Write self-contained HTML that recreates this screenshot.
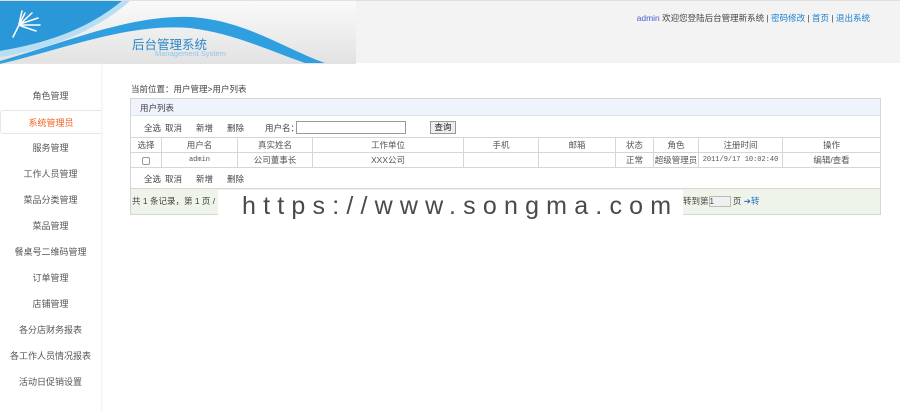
<!DOCTYPE html>
<html><head><meta charset="utf-8"><style>
*{margin:0;padding:0;box-sizing:border-box}
body{width:900px;height:412px;background:#fff;font-family:"Liberation Sans","Noto Sans CJK SC",sans-serif;font-size:9px;color:#444;position:relative;overflow:hidden}
.abs{position:absolute}
#hdr{left:0;top:0;width:900px;height:63px;background:#f3f3f3;border-top:1px solid #e0e0e0}
#top{right:30px;top:11px;font-size:8.5px;color:#444}
#top a{color:#1a7fd0;text-decoration:none}
#side{left:0;top:64px;width:101px;height:348px;box-shadow:1px 0 2px #eeeeee}
.it{position:absolute;left:0;width:101px;height:24px;line-height:24px;text-align:center;font-size:9px;color:#555}
.it.on{color:#f5601e;border:1px solid #e6e6e6;border-right:none;border-radius:3px 0 0 3px;background:#fff}
#box{left:130px;top:98px;width:751px;height:117px;border:1px solid #d6d6d6}
table{border-collapse:collapse;position:absolute;left:130px;top:137px;width:751px}
td{border:1px solid #d6d6d6;height:15px;text-align:center;font-size:8.5px;color:#555}
.tb span{margin-right:14px}
</style></head><body>
<div id="hdr" class="abs">
<svg width="356" height="63" style="position:absolute;left:0;top:0">
<defs><linearGradient id="g" x1="0" x2="0" y1="0" y2="1"><stop offset="0" stop-color="#fafafa"/><stop offset="1" stop-color="#e2e2e2"/></linearGradient></defs>
<rect width="356" height="63" fill="url(#g)"/>
<path d="M0 0H122C95 22 60 40 0 50Z" fill="#2a97d8"/>
<path d="M0 50C60 40 95 22 122 0H130C100 26 60 46 0 56Z" fill="#b8def4"/>
<path d="M0 60C70 40 130 14 190 16C245 19 285 48 325 62L305 62C265 48 232 32 190 27C130 22 70 46 0 63Z" fill="#2f9fe0"/>
<g stroke="#fff" stroke-width="1.5" fill="none" stroke-linecap="round"><path d="M13 36L20 22M19 24L25 12M19 24L32 12M20 23L38 17M20 24L40 24M21 25L36 30M19 23L22 10"/></g>
</svg>
<div class="abs" style="left:132px;top:33px;font-size:12.5px;color:#2a88c8">后台管理系统</div>
<div class="abs" style="left:155px;top:48px;font-size:7.5px;color:#8ec6ec">Management System</div>
<div id="top" class="abs"><span style="color:#4a5cd8">admin</span> 欢迎您登陆后台管理新系统 | <a>密码修改</a> | <a>首页</a> | <a>退出系统</a></div>
</div>
<div id="side" class="abs">
<div class="it" style="top:20px">角色管理</div>
<div class="it on" style="top:46px">系统管理员</div>
<div class="it" style="top:72px">服务管理</div>
<div class="it" style="top:98px">工作人员管理</div>
<div class="it" style="top:124px">菜品分类管理</div>
<div class="it" style="top:150px">菜品管理</div>
<div class="it" style="top:176px">餐桌号二维码管理</div>
<div class="it" style="top:202px">订单管理</div>
<div class="it" style="top:228px">店铺管理</div>
<div class="it" style="top:254px">各分店财务报表</div>
<div class="it" style="top:280px">各工作人员情况报表</div>
<div class="it" style="top:306px">活动日促销设置</div>
</div>
<div class="abs" style="left:131px;top:83px;font-size:8.5px">当前位置：用户管理&gt;用户列表</div>
<div id="box" class="abs"></div>
<div class="abs" style="left:131px;top:99px;width:749px;height:17px;background:#eef3fc;border-bottom:1px solid #dde3ee;padding:3px 0 0 9px;font-size:8.5px">用户列表</div>
<div class="abs tb" style="left:144px;top:122px;font-size:8.5px"><span style="margin-right:4px">全选</span><span>取消</span><span>新增</span><span>删除</span></div>
<div class="abs" style="left:265px;top:122px;font-size:8.5px">用户名：</div>
<div class="abs" style="left:296px;top:121px;width:110px;height:13px;border:1px solid #999"></div>
<div class="abs" style="left:430px;top:121px;width:26px;height:13px;border:1px solid #999;background:#eee;font-size:8.5px;text-align:center;line-height:11px;color:#222">查询</div>
<table><tr><td style="width:31px">选择</td><td style="width:76px">用户名</td><td style="width:75px">真实姓名</td><td style="width:151px">工作单位</td><td style="width:75px">手机</td><td style="width:77px">邮箱</td><td style="width:38px">状态</td><td style="width:45px">角色</td><td style="width:84px">注册时间</td><td>操作</td></tr>
<tr><td><span style="display:inline-block;width:8px;height:8px;border:1px solid #999;border-radius:2px;vertical-align:middle"></span></td><td style="font-family:'Liberation Mono',monospace;font-size:7px">admin</td><td>公司董事长</td><td>XXX公司</td><td></td><td></td><td>正常</td><td>超级管理员</td><td style="font-family:'Liberation Mono',monospace;font-size:7px">2011/9/17 10:02:40</td><td>编辑/查看</td></tr></table>
<div class="abs tb" style="left:144px;top:173px;font-size:8.5px"><span style="margin-right:4px">全选</span><span>取消</span><span>新增</span><span>删除</span></div>
<div class="abs" style="left:131px;top:188px;width:749px;height:26px;background:#eef4ea;border-top:1px solid #d6d6d6"></div>
<div class="abs" style="left:132px;top:195px;font-size:8.5px">共 1 条记录，第 1 页 /</div>
<div class="abs" style="left:683px;top:195px;font-size:8.5px">转到第<span style="display:inline-block;width:22px;height:11px;border:1px solid #bbb;background:#f0f0f0;vertical-align:middle;font-size:8px;line-height:9px">1</span> 页 <span style="color:#2a6fc0">➔转</span></div>
<div class="abs" style="left:218px;top:190px;width:465px;height:32px;background:#fff;font-size:25px;color:#4a4a4a;letter-spacing:7.2px;padding-left:24px;line-height:32px">https://www.songma.com</div>
</body></html>
